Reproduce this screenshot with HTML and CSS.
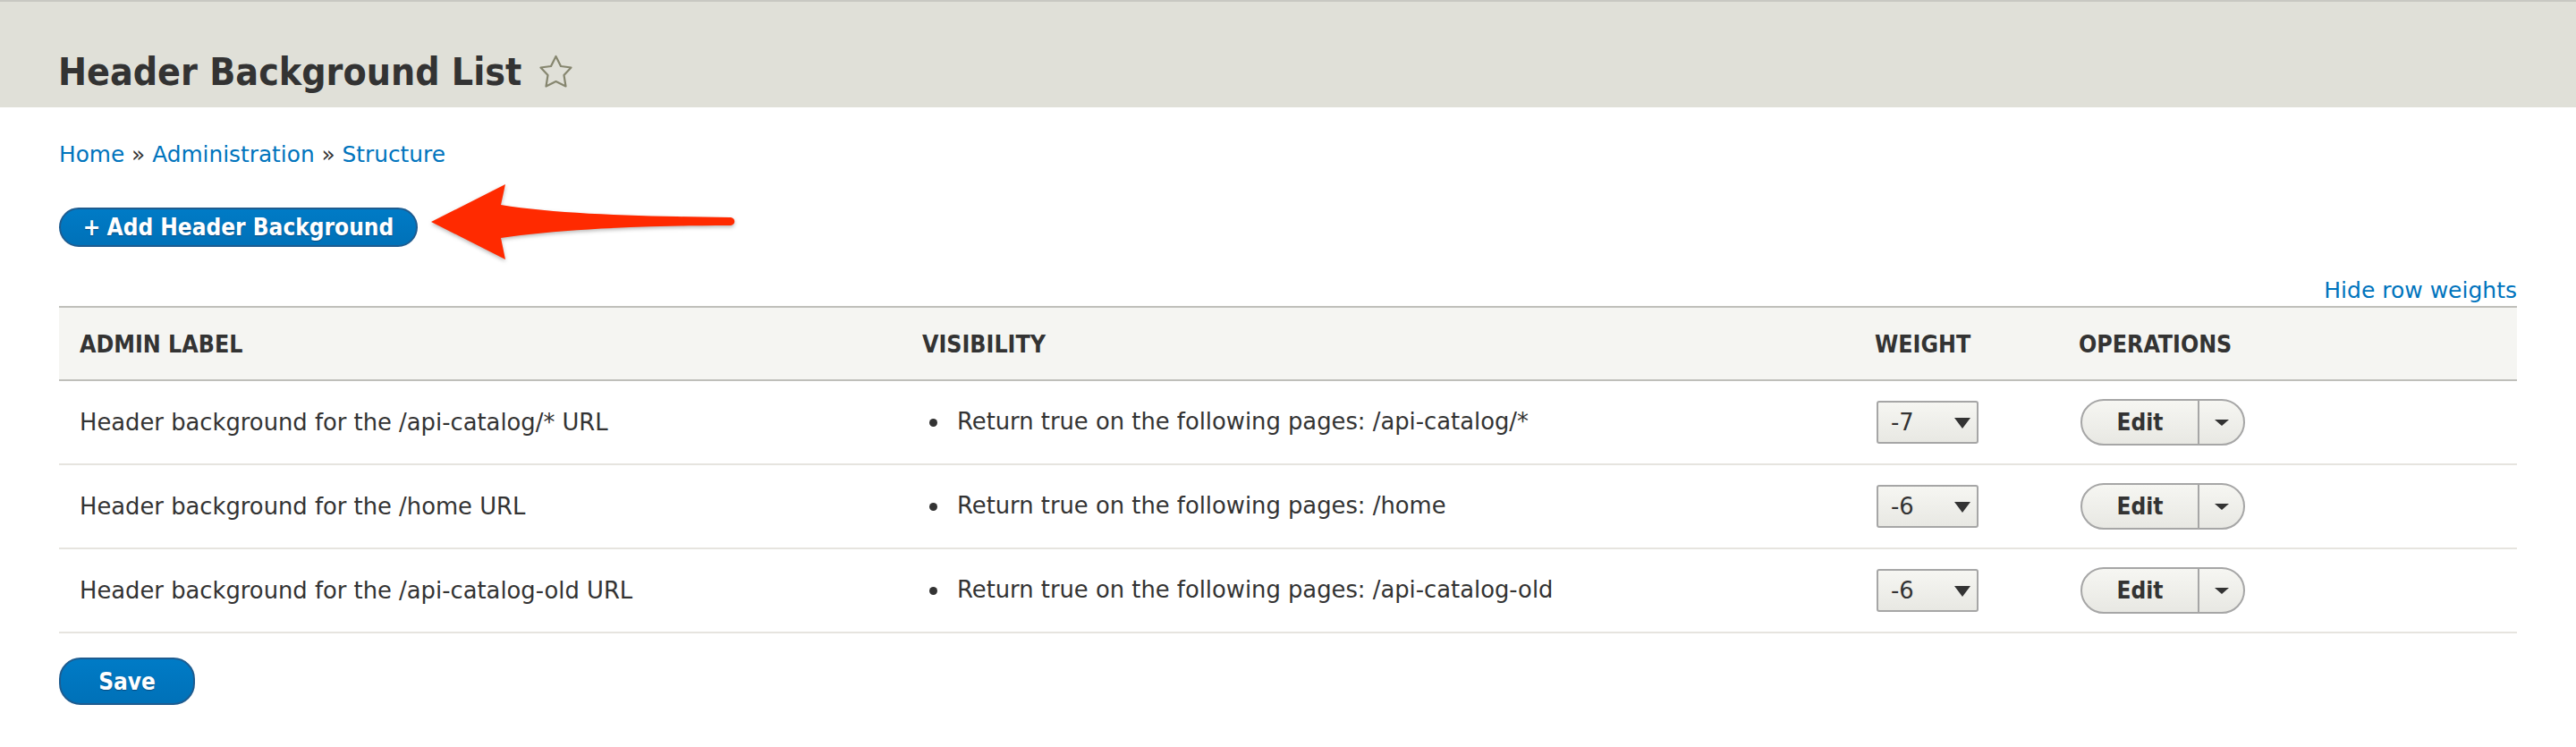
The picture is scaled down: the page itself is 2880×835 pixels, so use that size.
FILE: index.html
```html
<!DOCTYPE html>
<html lang="en">
<head>
<meta charset="utf-8">
<title>Header Background List</title>
<link rel="stylesheet" href="styles.css">
</head>
<body>
<header class="page-head">
  <h1 class="page-title">Header Background List</h1>
  <svg class="star" width="38" height="38" viewBox="0 0 38 38" aria-hidden="true"><path d="M18.5 2L24 13L35.5 14.5L27.5 23L29.5 35.5L18.5 30L7.5 35.5L9.5 23L1.5 14.5L13 13Z" fill="none" stroke="#86866f" stroke-width="2.2" stroke-linejoin="round"/></svg>
</header>
<main class="content">
  <nav class="breadcrumb"><a href="#">Home</a> » <a href="#">Administration</a> » <a href="#">Structure</a></nav>
  <div class="actions">
    <a class="btn btn-primary btn-add" href="#"><span class="plus">+</span> Add Header Background</a>
  </div>
  <svg class="arrow" width="360" height="100" viewBox="0 0 360 100" aria-hidden="true">
    <path class="arrow-shape" d="M4 48L87 6L82 29C150 40 250 42 338 43C345 43 345 52 338 52C250 52 150 56 82 66L87 90Z"/>
  </svg>
  <div class="weights-toggle"><a href="#">Hide row weights</a></div>
  <table class="list">
    <thead>
      <tr><th class="col-label">ADMIN LABEL</th><th class="col-vis">VISIBILITY</th><th class="col-weight">WEIGHT</th><th class="col-ops">OPERATIONS</th></tr>
    </thead>
    <tbody>
      <tr>
        <td>Header background for the /api-catalog/* URL</td>
        <td><ul class="vis"><li>Return true on the following pages: /api-catalog/*</li></ul></td>
        <td><label class="weight"><select><option>-7</option></select><svg class="weight-caret" width="18" height="12" viewBox="0 0 18 12" aria-hidden="true"><path d="M0 0H18L9 12Z"/></svg></label></td>
        <td><div class="dropbutton"><a class="drop-main" href="#">Edit</a><span class="drop-toggle"><svg width="16" height="7" viewBox="0 0 16 7" aria-hidden="true"><path d="M0 0H16L8 7Z"/></svg></span></div></td>
      </tr>
      <tr>
        <td>Header background for the /home URL</td>
        <td><ul class="vis"><li>Return true on the following pages: /home</li></ul></td>
        <td><label class="weight"><select><option>-6</option></select><svg class="weight-caret" width="18" height="12" viewBox="0 0 18 12" aria-hidden="true"><path d="M0 0H18L9 12Z"/></svg></label></td>
        <td><div class="dropbutton"><a class="drop-main" href="#">Edit</a><span class="drop-toggle"><svg width="16" height="7" viewBox="0 0 16 7" aria-hidden="true"><path d="M0 0H16L8 7Z"/></svg></span></div></td>
      </tr>
      <tr>
        <td>Header background for the /api-catalog-old URL</td>
        <td><ul class="vis"><li>Return true on the following pages: /api-catalog-old</li></ul></td>
        <td><label class="weight"><select><option>-6</option></select><svg class="weight-caret" width="18" height="12" viewBox="0 0 18 12" aria-hidden="true"><path d="M0 0H18L9 12Z"/></svg></label></td>
        <td><div class="dropbutton"><a class="drop-main" href="#">Edit</a><span class="drop-toggle"><svg width="16" height="7" viewBox="0 0 16 7" aria-hidden="true"><path d="M0 0H16L8 7Z"/></svg></span></div></td>
      </tr>
    </tbody>
  </table>
  <a class="btn btn-primary btn-save" href="#">Save</a>
</main>
</body>
</html>
```
FILE: styles.css
```css
* { box-sizing: border-box; }
html, body { margin: 0; padding: 0; }
body {
  background: #fff;
  color: #333;
  font-family: "DejaVu Sans", "Liberation Sans", sans-serif;
  font-size: 25.8px;
  height: 835px;
  overflow: hidden;
}
a { color: #0074bd; text-decoration: none; }

.page-head {
  height: 120px;
  background: #e0e0d8;
  border-top: 2px solid #c8c8c2;
  padding: 54px 0 0 65px;
  display: flex;
  align-items: flex-start;
}
.page-title {
  margin: 0;
  font-size: 42.5px;
  font-stretch: condensed;
  line-height: 50px;
  font-weight: 700;
  color: #333;
}
.star { margin: 5px 0 0 20px; flex: none; }

.content {
  position: relative;
  padding: 0 66px;
}
.breadcrumb { padding-top: 38px; line-height: 30px; height: 68px; color: #333; font-size: 24.8px; }

.actions { margin-top: 44px; height: 44px; display: flex; }
.btn {
  display: inline-flex;
  align-items: center;
  justify-content: center;
  border-radius: 24px;
  font-stretch: condensed;
  font-weight: 700;
}
.btn-primary {
  color: #fff;
  background: linear-gradient(#007bc6, #0071b8);
  border: 2px solid #1e5c90;
  text-shadow: 0 1px 1px #0a4a7c;
}
.btn-add { width: 401px; height: 44px; font-size: 26px; white-space: pre; }
.plus { margin-right: -1px; }
.btn-save { width: 152px; height: 53px; font-size: 26px; margin-top: 27px; }

.arrow {
  position: absolute;
  left: 478px;
  top: 80px;
  overflow: visible;
}
.arrow-shape { fill: #ff2a00; filter: drop-shadow(0 2px 2px rgba(0,0,0,.28)); }

.weights-toggle { margin-top: 32px; height: 34px; line-height: 34px; text-align: right; font-size: 25px; }

.list { width: 100%; border-collapse: collapse; table-layout: fixed; }
.list th {
  height: 82px;
  background: #f5f5f2;
  border-top: 2px solid #bfbfba;
  border-bottom: 2px solid #bfbfba;
  text-align: left;
  font-size: 26.5px;
  font-stretch: condensed;
  font-weight: 700;
  padding: 0 0 0 23px;
}
.list .col-weight, .list .col-ops { padding-left: 21px; }
.list td {
  height: 94px;
  border-bottom: 2px solid #e6e4df;
  padding: 0 0 0 23px;
  vertical-align: middle;
}
.col-label { width: 942px; }
.col-vis { width: 1067px; }
.col-weight { width: 228px; }

.vis { margin: 0 0 3px; padding: 0 0 0 39px; list-style: none; }
.vis li { position: relative; }
.vis li::before {
  content: "";
  position: absolute;
  left: -31px;
  top: 12px;
  width: 9px;
  height: 9px;
  border-radius: 50%;
  background: #333;
}

.weight { position: relative; display: block; width: 114px; height: 48px; }
.weight select {
  appearance: none;
  -webkit-appearance: none;
  width: 114px;
  height: 48px;
  border: 2px solid #a6a6a6;
  border-radius: 3px;
  background: linear-gradient(#f6f6f2, #e8e8e3);
  color: #333;
  font: inherit;
  padding: 0 0 0 14px;
  margin: 0;
}
.weight-caret {
  position: absolute;
  right: 9px;
  top: 19px;
  fill: #333;
  pointer-events: none;
}

.dropbutton {
  display: flex;
  width: 184px;
  height: 52px;
  border: 2px solid #a6a6a6;
  border-radius: 26px;
  background: linear-gradient(#f6f6f2, #e8e8e3);
  overflow: hidden;
}
.drop-main {
  flex: none;
  width: 131px;
  border-right: 2px solid #a6a6a6;
  display: flex;
  align-items: center;
  justify-content: center;
  color: #333;
  font-weight: 700;
  font-stretch: condensed;
  font-size: 26px;
}
.drop-toggle {
  flex: 1;
  display: flex;
  align-items: center;
  justify-content: center;
  fill: #333;
}
```
